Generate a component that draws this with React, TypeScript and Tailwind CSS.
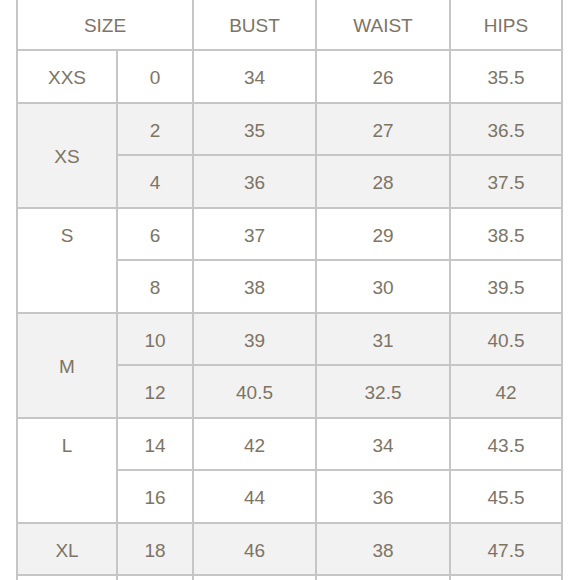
const rows: { size?: string; span?: number; top?: boolean; shade: boolean; us: string; bust: string; waist: string; hips: string }[] = [
  { size: "XXS", span: 1, shade: false, us: "0", bust: "34", waist: "26", hips: "35.5" },
  { size: "XS", span: 2, shade: true, us: "2", bust: "35", waist: "27", hips: "36.5" },
  { shade: true, us: "4", bust: "36", waist: "28", hips: "37.5" },
  { size: "S", span: 2, top: true, shade: false, us: "6", bust: "37", waist: "29", hips: "38.5" },
  { shade: false, us: "8", bust: "38", waist: "30", hips: "39.5" },
  { size: "M", span: 2, shade: true, us: "10", bust: "39", waist: "31", hips: "40.5" },
  { shade: true, us: "12", bust: "40.5", waist: "32.5", hips: "42" },
  { size: "L", span: 2, top: true, shade: false, us: "14", bust: "42", waist: "34", hips: "43.5" },
  { shade: false, us: "16", bust: "44", waist: "36", hips: "45.5" },
  { size: "XL", span: 1, shade: true, us: "18", bust: "46", waist: "38", hips: "47.5" },
  // next row only peeks in at the bottom edge
  { size: "", span: 1, shade: false, us: "", bust: "", waist: "", hips: "" },
];

function Cell({ children, shade, className = "" }: { children?: React.ReactNode; shade?: boolean; className?: string }) {
  return (
    <div className={`flex items-center justify-center pt-[4px] ${shade ? "bg-[#f2f2f2]" : "bg-white"} ${className}`}>
      {children}
    </div>
  );
}

function App() {
  return (
    <div className="h-[580px] w-[580px] overflow-hidden bg-white font-['Liberation_Sans',Arial,sans-serif] text-[19px] text-[#7d7465]">
      <div className="ml-[16px] mt-[-3px] grid w-[547px] grid-cols-[98px_74px_121px_132px_110px] grid-rows-[50px] auto-rows-[50.5px] gap-[2px] border-2 border-[#c6c6c6] bg-[#c6c6c6]">
        <Cell className="col-span-2">SIZE</Cell>
        <Cell>BUST</Cell>
        <Cell>WAIST</Cell>
        <Cell>HIPS</Cell>
        {rows.map((r, i) => (
          <>
            {r.size !== undefined && (
              <div
                key={`s${i}`}
                className={`flex flex-col ${r.shade ? "bg-[#f2f2f2]" : "bg-white"} ${r.span === 2 ? "row-span-2" : ""} ${r.top ? "justify-start" : "justify-center"}`}
              >
                <div className="flex h-[50.5px] items-center justify-center pt-[4px]">{r.size}</div>
              </div>
            )}
            <Cell key={`u${i}`} shade={r.shade}>{r.us}</Cell>
            <Cell key={`b${i}`} shade={r.shade}>{r.bust}</Cell>
            <Cell key={`w${i}`} shade={r.shade}>{r.waist}</Cell>
            <Cell key={`h${i}`} shade={r.shade}>{r.hips}</Cell>
          </>
        ))}
      </div>
    </div>
  );
}

export default App;
